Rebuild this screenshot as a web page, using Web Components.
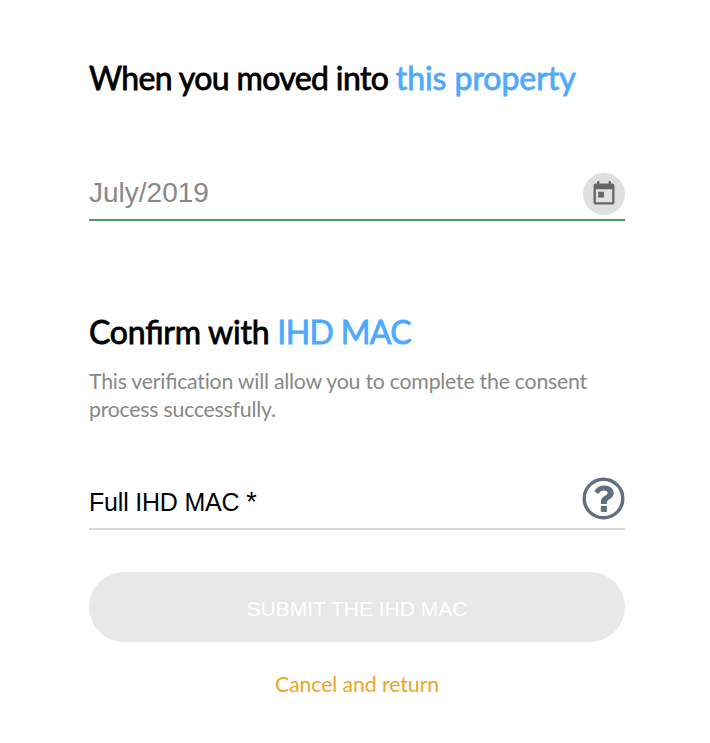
<!DOCTYPE html>
<html lang="en"><head><meta charset="utf-8"><title>Confirm property</title>
<style>body{margin:0;background:#fff}</style></head><body>
<consent-form></consent-form>
<script>
const define = (name, html) => customElements.define(name, class extends HTMLElement {
  constructor() { super(); this.attachShadow({mode:'open'}).innerHTML = html; }
});
define('section-title', `<style>
:host{display:block;font:400 32px/40px Lato,sans-serif;font-feature-settings:"liga" 1;color:#000;-webkit-text-stroke:.8px currentColor;white-space:nowrap}
::slotted(span){color:#4da9ff}
</style><slot></slot>`);
define('date-field', `<style>
:host{display:flex;align-items:center;justify-content:space-between;box-sizing:border-box;height:48px;padding-bottom:4px;border-bottom:2px solid #4a9c66;font:28px/32px "Liberation Sans",sans-serif;color:#888}
.text{padding-bottom:2px}
.btn{width:42px;height:42px;border-radius:50%;background:#e0e0e0;display:flex;align-items:center;justify-content:center}
svg{width:28px;height:28px;fill:#666}
</style><div class="text"><slot></slot></div><div class="btn"><svg viewBox="0 0 24 24"><path d="M19 3h-1V1h-2v2H8V1H6v2H5c-1.1 0-2 .9-2 2v14c0 1.1.9 2 2 2h14c1.1 0 2-.9 2-2V5c0-1.1-.9-2-2-2zm0 16H5V8h14v11zM7 10h5v5H7z"/></svg></div>`);
define('mac-field', `<style>
:host{display:flex;align-items:center;justify-content:space-between;box-sizing:border-box;height:54px;border-bottom:2px solid #d9d9d9;font:25px/30px "Liberation Sans",sans-serif;letter-spacing:-.2px;color:#000}
::slotted(span){font-size:27px;line-height:20px}
svg{width:43px;height:43px;display:block;margin-top:-7px}
</style><div><slot></slot></div><svg viewBox="0 0 43 43" fill="#607080"><circle cx="21.5" cy="21.5" r="19.3" fill="none" stroke="#607080" stroke-width="3.4"/><path d="M12.4 14.2C14.4 10.2 17.7 8.4 22 8.4C27.8 8.4 31.7 11.3 31.7 16C31.7 22.3 24.9 21.8 24.9 25.3V26.9H18.9V24.8C18.9 19.1 25.6 19.1 25.6 16.1C25.6 14.5 24.3 13.5 21.8 13.5C19.5 13.5 18.2 14.4 16.3 17.1Z"/><path d="M18.8 29h6.1v5.9h-6.1z"/></svg>`);
define('submit-button', `<style>:host{display:flex;align-items:center;justify-content:center;box-sizing:border-box;height:70px;border-radius:35px;background:#e8e8e8;color:#fff;font:21px/24px "Liberation Sans",sans-serif;padding-top:3px}</style><slot></slot>`);
define('consent-form', `<style>
:host{display:flex;flex-direction:column;box-sizing:border-box;width:710px;height:743px;padding:58px 85px 0 89px}
.first{letter-spacing:-.63px}.first span{letter-spacing:-.05px}
date-field{margin-top:75px}.second{margin-top:91px;letter-spacing:-.22px}.second .accent{letter-spacing:-.65px}
p{margin:15px 0 0;font:21.3px/28px Lato,sans-serif;letter-spacing:-.24px;color:#888;width:530px}
.line{display:block}.liga{font-feature-settings:"liga" 1}
mac-field{margin-top:53px}submit-button{margin-top:42px}
a{align-self:center;margin-top:28px;font:21.3px/28px Lato,sans-serif;letter-spacing:-.1px;color:#eda528}
</style>
<section-title class="first">When you moved into <span>this property</span></section-title>
<date-field>July/2019</date-field>
<section-title class="second">Confirm with <span class="accent">IHD MAC</span></section-title>
<p><span class="line"><span class="liga">This verific</span>ation will allow you to complete the consent </span><span class="line">process successfully.</span></p>
<mac-field>Full IHD MAC <span>*</span></mac-field>
<submit-button>SUBMIT THE IHD MAC</submit-button>
<a>Cancel and return</a>`);
</script></body></html>
